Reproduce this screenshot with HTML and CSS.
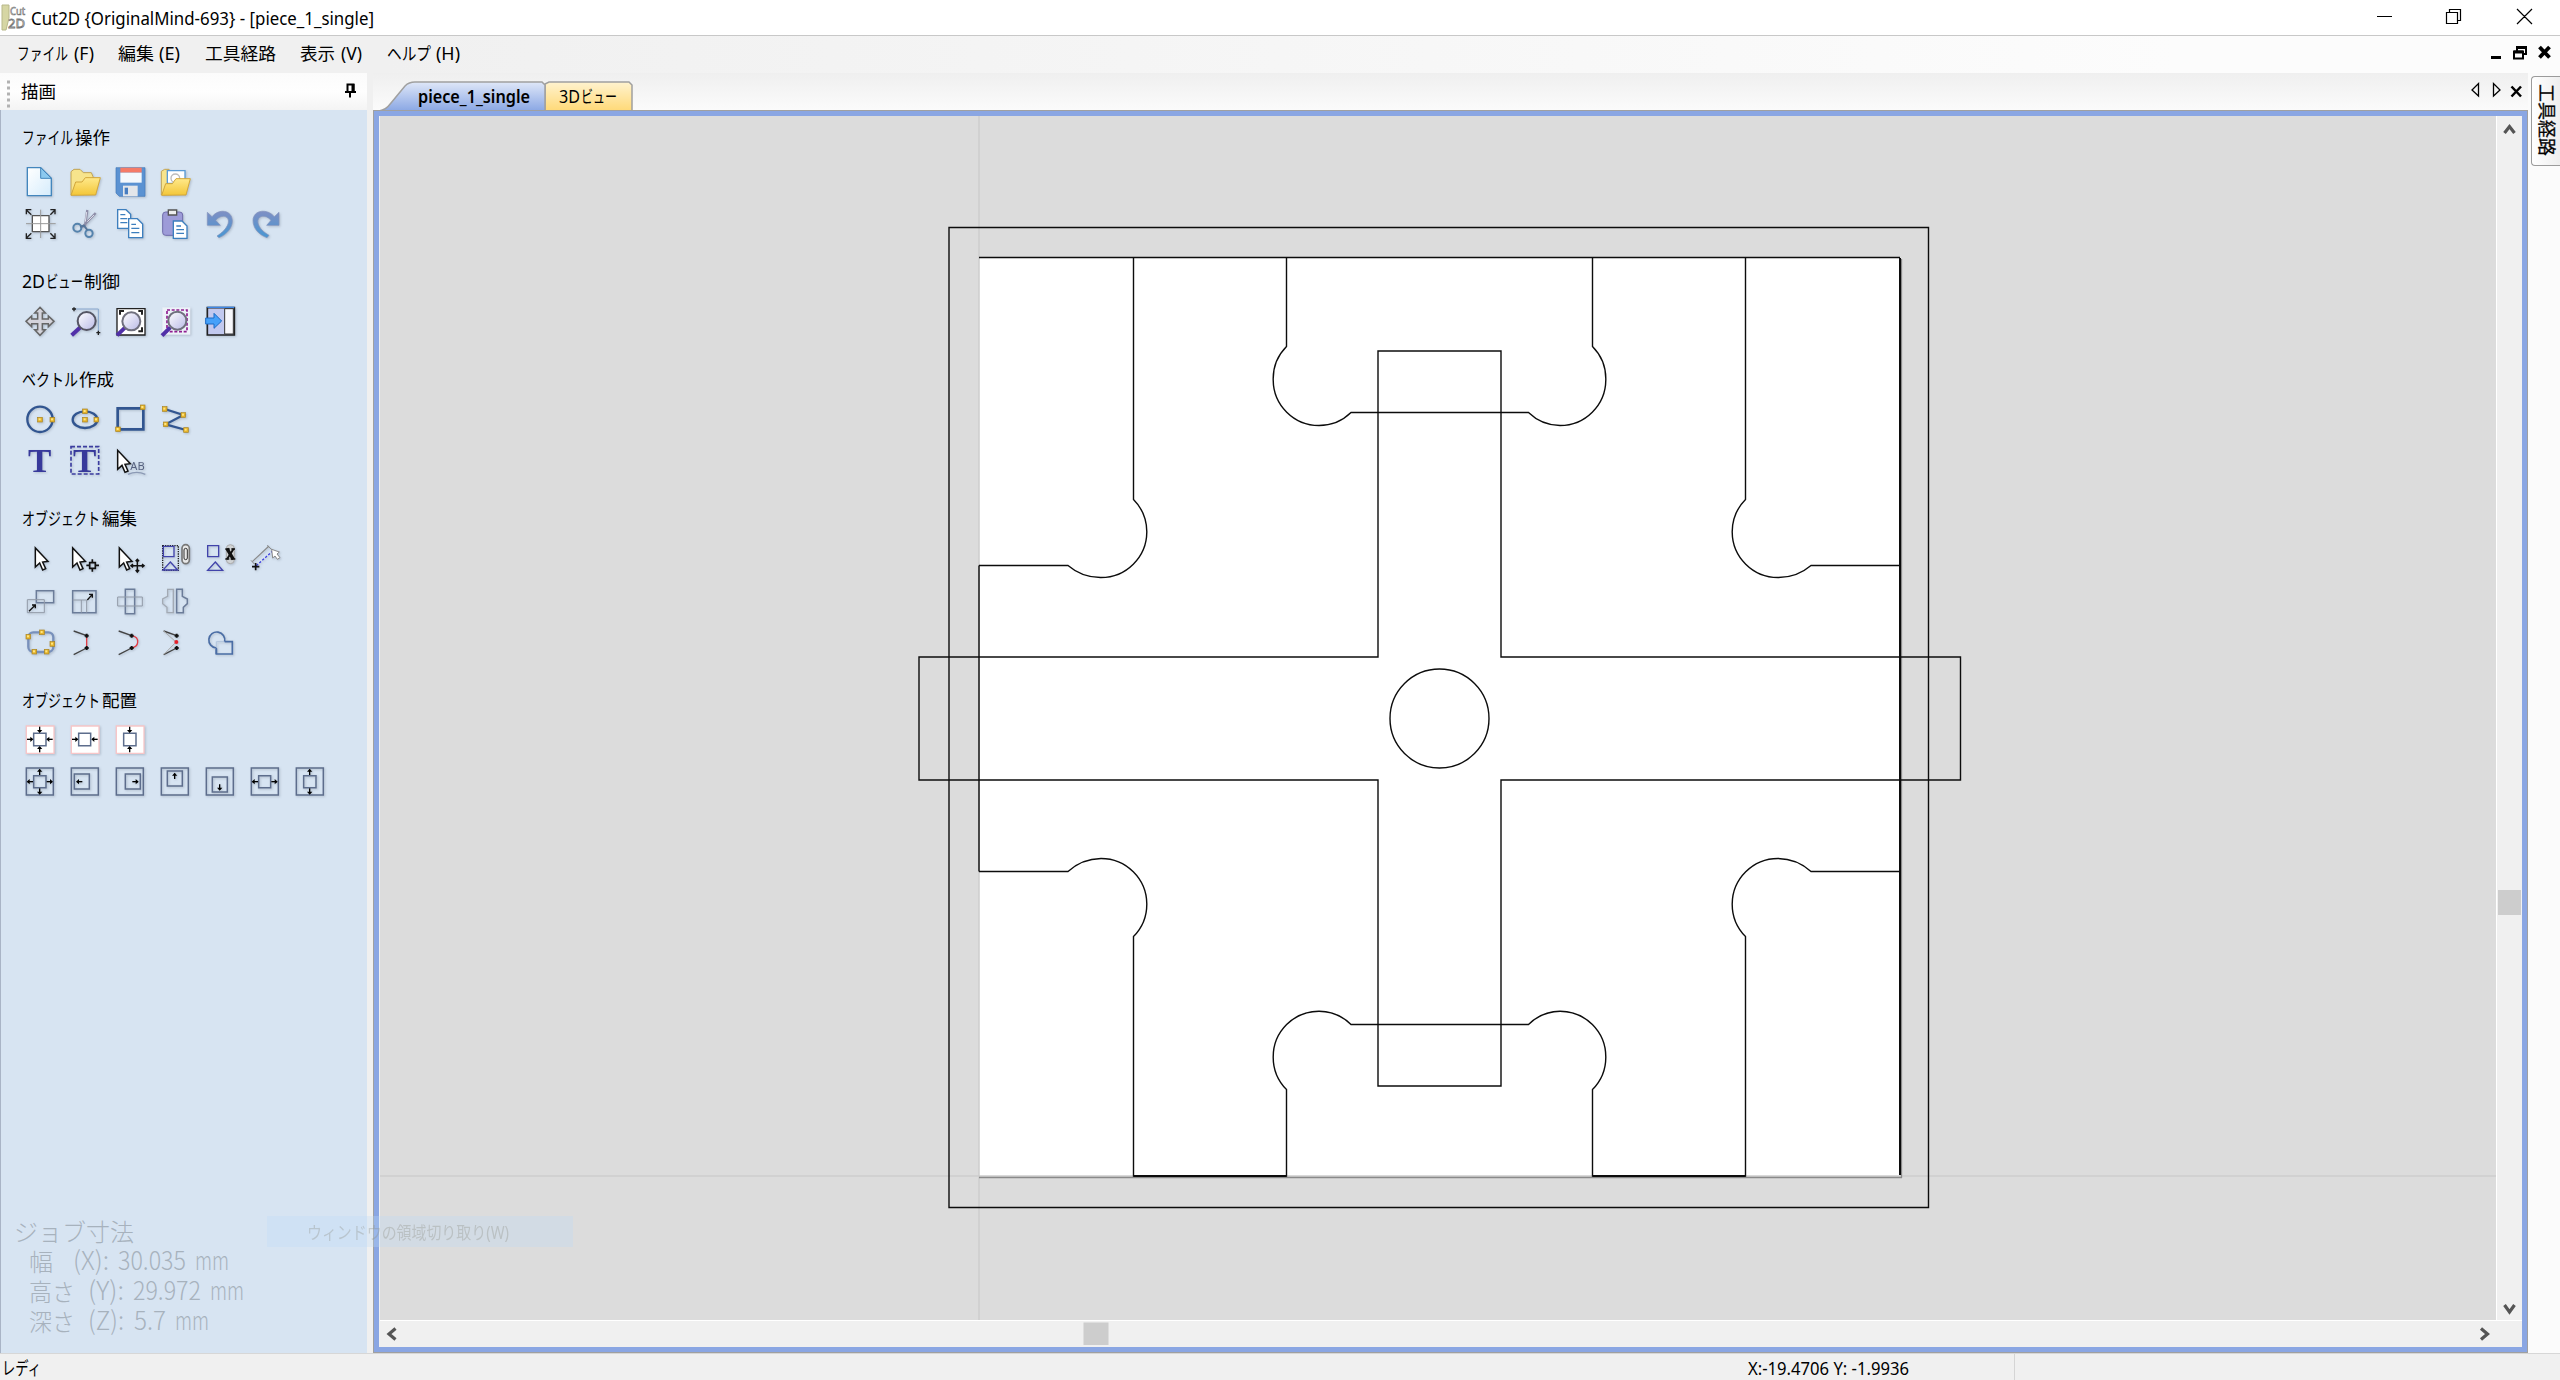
FILE: index.html
```html
<!DOCTYPE html>
<html lang="ja">
<head>
<meta charset="utf-8">
<title>Cut2D</title>
<link rel="stylesheet" href="styles.css">
</head>
<body>
<svg width="0" height="0" class="defs">
  <defs>
    <linearGradient id="paper" x1="0" y1="0" x2="1" y2="1"><stop offset="0" stop-color="#fff"/><stop offset="1" stop-color="#d5ecfc"/></linearGradient>
    <linearGradient id="gold" x1="0" y1="0" x2="0" y2="1"><stop offset="0" stop-color="#ffe98a"/><stop offset="1" stop-color="#f3c638"/></linearGradient>
    <linearGradient id="blue" x1="0" y1="0" x2="0" y2="1"><stop offset="0" stop-color="#7f8fc4"/><stop offset="1" stop-color="#4796d2"/></linearGradient>
    <linearGradient id="lens" x1="0" y1="0" x2="1" y2="1"><stop offset="0" stop-color="#fff"/><stop offset="1" stop-color="#b9b9e6"/></linearGradient>
    <linearGradient id="tabBlue" x1="0" y1="0" x2="0" y2="1"><stop offset="0" stop-color="#dfe7f8"/><stop offset="1" stop-color="#8aa7e4"/></linearGradient>
    <linearGradient id="tabGold" x1="0" y1="0" x2="0" y2="1"><stop offset="0" stop-color="#fff3cf"/><stop offset="1" stop-color="#ffd977"/></linearGradient>
    <path id="cursor" d="M0 0V57L13 45L22 66L31 62L22 42L38 40Z" fill="#fff" stroke="#111" stroke-width="4.500"/>
    <g id="node"><rect x="-7" y="-7" width="14" height="14" fill="#e5b32c" stroke="#a98424" stroke-width="2"/><rect x="-4" y="-4" width="6" height="6" fill="#ffe680"/></g>
    <g id="arrow"><path d="M0 0H16" stroke="#000" stroke-width="4"/><path d="M10 -8L19 0L10 8Z"/></g>
  </defs>
</svg>
<div class="window">
  <header class="titlebar">
    <svg class="app-icon" width="24" height="26" viewBox="0 0 24 26"><path d="M0 0H7V13L4 25H0Z" fill="#d6d6a4" stroke="#b8b88a"/><text x="8" y="10" font-size="11" fill="#fff" stroke="#777" stroke-width=".7" textLength="15" lengthAdjust="spacingAndGlyphs">Cut</text><text x="6" y="23" font-size="13" fill="#fff" stroke="#777" stroke-width=".8" textLength="17" lengthAdjust="spacingAndGlyphs">2D</text></svg>
    <svg width="346" height="30"><text x="1" y="19.500" font-size="18.500" textLength="343" lengthAdjust="spacingAndGlyphs">Cut2D {OriginalMind-693} - [piece_1_single]</text></svg>
    <svg class="win-buttons" width="160" height="20" viewBox="2375 7 160 20" fill="none" stroke="#000" stroke-width="1.2"><path d="M2377 16.500H2392M2446.500 12.500H2457.500V23.500H2446.500ZM2449.500 12V9.500H2460.500V20.500H2458M2517 9L2532 24M2532 9L2517 24"/></svg>
  </header>
  <nav class="menubar">
    <svg width="480" height="36" viewBox="0 36 480 36" font-size="17.500">
      <text x="17" y="60" textLength="51" lengthAdjust="spacingAndGlyphs">ファイル</text><text x="74" y="60" textLength="20" lengthAdjust="spacingAndGlyphs">(F)</text>
      <text x="118" y="60" textLength="36" lengthAdjust="spacingAndGlyphs">編集</text><text x="159" y="60" textLength="21" lengthAdjust="spacingAndGlyphs">(E)</text>
      <text x="205" y="60" textLength="71" lengthAdjust="spacingAndGlyphs">工具経路</text>
      <text x="300" y="60" textLength="35" lengthAdjust="spacingAndGlyphs">表示</text><text x="341" y="60" textLength="21" lengthAdjust="spacingAndGlyphs">(V)</text>
      <text x="387" y="60" textLength="44" lengthAdjust="spacingAndGlyphs">ヘルプ</text><text x="436" y="60" textLength="24" lengthAdjust="spacingAndGlyphs">(H)</text>
    </svg>
    <svg class="mdi-buttons" width="66" height="20" viewBox="2488 43 66 20" fill="none" stroke="#000" stroke-width="2"><path d="M2491 57.500H2501" stroke-width="3"/><path d="M2514 51.500H2523V58.500H2514ZM2517 51V47H2526V54H2523"/><path d="M2514 52H2523M2517 47.500H2526" stroke-width="3"/><path d="M2539.500 47L2549.500 57.500M2549.500 47L2539.500 57.500" stroke-width="3.800"/></svg>
  </nav>
  <main class="work">
    <aside class="drawer">
      <div class="drawer-head">
        <svg width="366" height="37" viewBox="0 73 366 37"><path d="M8.500 80.500V108" stroke="#b2b2b2" stroke-width="3" stroke-dasharray="3 3"/><text x="21" y="97.500" font-size="17.500" textLength="35" lengthAdjust="spacingAndGlyphs">描画</text><path d="M347.500 92V84.500H353.500V92M345 92H356M350 92V97.500" fill="none" stroke="#000" stroke-width="2"/><path d="M353 84V92" stroke="#000" stroke-width="3"/></svg>
      </div>
      <div class="panel">
        <section><svg class="head" width="240" height="32" viewBox="17 129 240 32"><text x="22" y="144" textLength="51" lengthAdjust="spacingAndGlyphs">ファイル</text><text x="75" y="144" textLength="35" lengthAdjust="spacingAndGlyphs">操作</text></svg>
          <div class="icons">
            <svg viewBox="54 123 135 126"><path d="M82 143H122L154 175V227H82Z" fill="url(#paper)" stroke="#4386bd" stroke-width="4"/><path d="M122 143V175H154Z" fill="#8cc9ef" stroke="#4386bd" stroke-width="3"/></svg>
            <svg viewBox="189 123 135 126"><path d="M213 225V155L222 148H240L250 158H274L279 170V180Z" fill="#f7e48c" stroke="#c2a455" stroke-width="3"/><path d="M213 226L227 186H246L256 173H301L287 225Z" fill="url(#gold)" stroke="#d2a63a" stroke-width="3"/></svg>
            <svg viewBox="324 123 135 126"><path d="M348 143H435V229H358L348 219Z" fill="#5b92d2" stroke="#4379b8" stroke-width="2"/><path d="M361 143H425V158H361Z" fill="#f57b68"/><path d="M361 158H425V188H361Z" fill="#f3f8fd"/><path d="M369 197H413V229H369Z" fill="#e3e6ea"/><path d="M374 203H384V223H374Z" fill="#477dc0"/></svg>
            <svg viewBox="459 123 135 126"><path d="M484 225V154L494 148H507L514 157V190Z" fill="#f7e48c" stroke="#c2a455" stroke-width="3"/><path d="M502 152H555V190H502Z" fill="#fff" stroke="#5a9bd5" stroke-width="4"/><circle cx="526" cy="175" r="13" fill="none" stroke="#bbb" stroke-width="4"/><path d="M485 226L497 191H517L528 176H571L558 225Z" fill="url(#gold)" stroke="#d2a63a" stroke-width="3"/></svg>
          </div>
          <div class="icons">
            <svg viewBox="54 249 135 126"><path d="M97 287H147V335H97Z" fill="#fff" stroke="#555" stroke-width="4"/><path d="M122 269V354M78 311H167" stroke="#999" stroke-width="3"/><path d="M79 283V269H94M79 270L94 284M151 269H165V283M165 270L151 284M79 340V355H94M79 354L94 340M151 355H165V340M165 354L151 340" fill="none" stroke="#222" stroke-width="4"/></svg>
            <svg viewBox="189 249 135 126"><path d="M262 270L255 318M287 279L246 322" stroke="#8e8ea8" stroke-width="7"/><path d="M260 276L256 305M282 285L262 305" stroke="#dcdce8" stroke-width="3"/><circle cx="232" cy="323" r="12" fill="none" stroke="#5583ad" stroke-width="6"/><circle cx="267" cy="340" r="11" fill="none" stroke="#5583ad" stroke-width="6"/><path d="M240 320L252 317L262 330" fill="none" stroke="#55759a" stroke-width="6"/></svg>
            <svg viewBox="324 249 135 126" stroke="#3d7fbe" stroke-width="4" fill="#fff"><path d="M353 269H378L392 283V325H353Z"/><path d="M361 284H376M361 296H382M361 308H382"/><path d="M386 296H412L428 312V353H386Z"/><path d="M394 313H408M394 325H418M394 338H418"/></svg>
            <svg viewBox="459 249 135 126"><rect x="488" y="276" width="60" height="70" rx="9" fill="#9d9bd8" stroke="#706cab" stroke-width="3"/><path d="M505 285V270H530V285Z" fill="#eee" stroke="#555" stroke-width="4"/><path d="M520 303H546L561 318V355H520Z" fill="#fff" stroke="#3d7fbe" stroke-width="4"/><path d="M529 318H543M529 329H552M529 340H552" stroke="#3d7fbe" stroke-width="4"/></svg>
            <svg viewBox="594 249 135 126"><path d="M622 277V316H661L647 301C665 280 692 288 684 312C679 326 667 338 651 348L657 353C682 343 697 322 697 303C696 269 656 265 636 290Z" fill="url(#blue)" stroke="#8292bd" stroke-width="2"/></svg>
            <svg viewBox="729 249 135 126"><path d="M837 277V316H800L813 301C797 281 770 286 774 309C778 326 791 336 807 346L801 353C775 344 759 324 759 301C760 269 802 265 823 290Z" fill="url(#blue)" stroke="#8292bd" stroke-width="2"/></svg>
          </div>
        </section>
        <section><svg class="head" width="240" height="32" viewBox="17 269 240 32"><text x="22" y="288" textLength="23" lengthAdjust="spacingAndGlyphs">2D</text><text x="46" y="288" textLength="37" lengthAdjust="spacingAndGlyphs">ビュー</text><text x="84" y="288" textLength="36" lengthAdjust="spacingAndGlyphs">制御</text></svg>
          <div class="icons">
            <svg viewBox="54 543 135 126"><path d="M120 562L136 579H127V597H145V588L162 604L145 620V611H127V629H136L120 646L104 629H113V611H95V620L78 604L95 588V597H113V579H104Z" fill="#d4d4dc" stroke="#666" stroke-width="4.500"/></svg>
            <svg viewBox="189 543 135 126"><path d="M222 567H295V638" fill="none" stroke="#86a6cd" stroke-width="3"/><path d="M222 562V574M216 567H228M295 632V645M289 638H301" stroke="#222" stroke-width="4"/><path d="M215 646L242 621" stroke="#5130a8" stroke-width="12"/><circle cx="260" cy="603" r="27" fill="url(#lens)" stroke="#555563" stroke-width="6"/></svg>
            <svg viewBox="324 543 135 126"><path d="M351 566H435V645H351Z" fill="#fff" stroke="#222" stroke-width="4"/><path d="M360 584V573H372M415 573H426V584M426 622V634H415" fill="none" stroke="#222" stroke-width="6"/><path d="M351 646L375 623" stroke="#5130a8" stroke-width="12"/><circle cx="394" cy="604" r="27" fill="url(#lens)" stroke="#70707e" stroke-width="6"/></svg>
            <svg viewBox="459 543 135 126"><path d="M487 562H571V644H487Z" fill="#edf2f9"/><path d="M501 570H561V635H501Z" fill="none" stroke="#901c90" stroke-width="5" stroke-dasharray="9 5"/><path d="M486 647L511 622" stroke="#5130a8" stroke-width="12"/><circle cx="532" cy="602" r="27" fill="url(#lens)" stroke="#70707e" stroke-width="6"/></svg>
            <svg viewBox="594 543 135 126"><path d="M622 563H703V645H622Z" fill="#c2c9ef" stroke="#222" stroke-width="5"/><path d="M622 562H703" stroke="#3e88e8" stroke-width="4"/><path d="M674 566H700V642H674Z" fill="#f7f7fb" stroke="#333" stroke-width="3"/><path d="M617 594H642V580L665 603L642 625V612H617Z" fill="#45a1fa" stroke="#1c6ac5" stroke-width="3"/></svg>
          </div>
        </section>
        <section><svg class="head" width="240" height="32" viewBox="17 366 240 32"><text x="22" y="385.500" textLength="56" lengthAdjust="spacingAndGlyphs">ベクトル</text><text x="79" y="385.500" textLength="35" lengthAdjust="spacingAndGlyphs">作成</text></svg>
          <div class="icons">
            <svg viewBox="54 114 135 126"><circle cx="120" cy="178" r="38" fill="none" stroke="#315590" stroke-width="7"/><use href="#node" x="120" y="179"/><use href="#node" x="157" y="179"/></svg>
            <svg viewBox="189 114 135 126"><ellipse cx="255" cy="179" rx="37" ry="25" fill="none" stroke="#315590" stroke-width="7"/><use href="#node" x="255" y="154"/><use href="#node" x="255" y="179"/><use href="#node" x="289" y="179"/></svg>
            <svg viewBox="324 114 135 126"><path d="M353 145H430V208H353Z" fill="none" stroke="#315590" stroke-width="8"/><use href="#node" x="428" y="142"/><use href="#node" x="354" y="208"/></svg>
            <svg viewBox="459 114 135 126"><path d="M494 147L550 165L497 193L558 210" fill="none" stroke="#315590" stroke-width="7"/><use href="#node" x="494" y="147"/><use href="#node" x="550" y="165"/><use href="#node" x="497" y="193"/><use href="#node" x="558" y="210"/></svg>
          </div>
          <div class="icons">
            <svg viewBox="54 240 135 126"><text x="84" y="335" class="serif" textLength="70" lengthAdjust="spacingAndGlyphs">T</text></svg>
            <svg viewBox="189 240 135 126"><path d="M213 260H296V342H213Z" fill="none" stroke="#3c3da0" stroke-width="5" stroke-dasharray="12 6"/><text x="219" y="335" class="serif" textLength="70" lengthAdjust="spacingAndGlyphs">T</text></svg>
            <svg viewBox="324 240 135 126"><use href="#cursor" x="353" y="271"/><text x="391" y="331" font-size="31" fill="#56617f" textLength="43" lengthAdjust="spacingAndGlyphs">AB</text><path d="M384 343Q410 331 436 343" fill="none" stroke="#8c9ab5" stroke-width="4"/></svg>
          </div>
        </section>
        <section><svg class="head" width="240" height="32" viewBox="17 507 240 32"><text x="22" y="524.500" textLength="78" lengthAdjust="spacingAndGlyphs">オブジェクト</text><text x="102" y="524.500" textLength="35" lengthAdjust="spacingAndGlyphs">編集</text></svg>
          <div class="icons">
            <svg viewBox="54 537 135 126"><use href="#cursor" x="106" y="564"/></svg>
            <svg viewBox="189 537 135 126"><use href="#cursor" x="218" y="564"/><path d="M269 608H286V625H269ZM277 598V608M277 625V635M259 616H269M286 616H297" fill="none" stroke="#111" stroke-width="5"/></svg>
            <svg viewBox="324 537 135 126"><use href="#cursor" x="358" y="564"/><path d="M412 600V634M395 617H430M407 604L412 598L417 604M407 630L412 636L417 630M399 612L393 617L399 622M426 612L432 617L426 622" fill="none" stroke="#111" stroke-width="4.500"/></svg>
            <svg viewBox="459 537 135 126"><path d="M488 557H535V631H488Z" fill="none" stroke="#222" stroke-width="4" stroke-dasharray="4 3"/><path d="M490 559H522V590H490ZM511 606L533 630H489Z" fill="none" stroke="#4143ab" stroke-width="4"/><rect x="546" y="554" width="22" height="57" rx="11" fill="#e8e8e8" stroke="#777" stroke-width="5"/><rect x="552" y="565" width="10" height="34" rx="5" fill="none" stroke="#333" stroke-width="3"/></svg>
            <svg viewBox="594 537 135 126"><path d="M623 557H656V590H623ZM646 606L668 631H623Z" fill="none" stroke="#4143ab" stroke-width="4"/><rect x="679" y="554" width="24" height="57" rx="12" fill="#d0d3d5" stroke="#aaa" stroke-width="3"/><path d="M681 566L700 598" stroke="#111" stroke-width="10"/><path d="M701 566L681 598" stroke="#111" stroke-width="6"/><path d="M676 567H689M694 567H705M676 597H688M692 597H706" stroke="#111" stroke-width="4"/></svg>
            <svg viewBox="729 537 135 126"><path d="M757 605L807 558" stroke="#888" stroke-width="3.500"/><path d="M753 601L763 612M801 556L818 571" stroke="#888" stroke-width="3"/><path d="M769 617L818 573" stroke="#3f3fe0" stroke-width="4" stroke-dasharray="7 5"/><path d="M767 609V631M756 620H778" stroke="#111" stroke-width="5"/><path d="M815 568L838 576L831 582L840 593L832 598L825 588L818 594Z" fill="#fff" stroke="#888" stroke-width="3"/></svg>
          </div>
          <div class="icons">
            <svg viewBox="54 663 135 126" fill="none"><path d="M109 692H161V728H109Z" stroke="#6b7c99" stroke-width="4.500"/><path d="M82 719H133V758H82Z" stroke="#929ba8" stroke-width="3"/><path d="M87 754L106 735M96 735H106V745" stroke="#111" stroke-width="4"/></svg>
            <svg viewBox="189 663 135 126" fill="none"><path d="M218 692H288V758H218Z" stroke="#6b7c99" stroke-width="4.500"/><path d="M218 720H260V758M244 720V758" stroke="#929ba8" stroke-width="3"/><path d="M262 720L277 703M267 703H277V713" stroke="#111" stroke-width="4"/></svg>
            <svg viewBox="324 663 135 126" fill="none"><path d="M376 688H404V761H376Z" stroke="#6b7c99" stroke-width="4.500"/><path d="M353 711H427V738H353Z" stroke="#929ba8" stroke-width="3"/></svg>
            <svg viewBox="459 663 135 126" fill="none"><path d="M520 688H503V709L488 717V731L501 742V758H520Z" stroke="#a3aab4" stroke-width="4"/><path d="M530 688H547V709L562 717V731L550 742V758H530Z" stroke="#6b7c99" stroke-width="4.500"/></svg>
          </div>
          <div class="icons">
            <svg viewBox="54 69 135 126"><rect x="85" y="97" width="75" height="59" rx="15" fill="none" stroke="#7890bb" stroke-width="7"/><use href="#node" x="85" y="110"/><use href="#node" x="126" y="97"/><use href="#node" x="157" y="132"/><use href="#node" x="103" y="155"/><use href="#node" x="140" y="155"/></svg>
            <svg viewBox="189 69 135 126" fill="none" stroke="#444" stroke-width="4"><path d="M221 93L260 107M260 144L221 164"/><path d="M260 107V144" stroke="#e03d46"/><path d="M254 107H266M260 101V113M254 144H266M260 138V150" stroke="#111" stroke-width="6"/></svg>
            <svg viewBox="324 69 135 126" fill="none" stroke="#444" stroke-width="4"><path d="M356 93L395 107M395 144L356 164"/><path d="M395 107Q415 111 413 127Q412 140 395 144" stroke="#e03d46"/><path d="M389 107H401M395 101V113M389 144H401M395 138V150" stroke="#111" stroke-width="6"/></svg>
            <svg viewBox="459 69 135 126" fill="none" stroke="#444" stroke-width="4"><path d="M491 93L530 107M530 144L491 164"/><path d="M491 93L528 126L491 164" stroke="#aaa" stroke-width="3"/><path d="M524 107H536M530 101V113M524 144H536M530 138V150" stroke="#111" stroke-width="6"/><circle cx="529" cy="126" r="6" fill="#e6222c" stroke="none"/></svg>
            <svg viewBox="594 69 135 126" fill="none"><path d="M649 148V162H697V125H674" stroke="#4a6da5" stroke-width="5"/><path d="M674 125H649V148" stroke="#b1c4dd" stroke-width="3"/><path d="M649 144A24 24 0 1 1 674 125M649 144V162" stroke="#4a6da5" stroke-width="5"/></svg>
          </div>
        </section>
        <section><svg class="head" width="240" height="32" viewBox="17 687 240 32"><text x="22" y="706.500" textLength="78" lengthAdjust="spacingAndGlyphs">オブジェクト</text><text x="102" y="706.500" textLength="35" lengthAdjust="spacingAndGlyphs">配置</text></svg>
          <div class="icons">
            <svg viewBox="54 357 135 126"><path class="pink" d="M79 378H162V460H79Z"/><path class="box" d="M101 400H138V437H101Z"/><use href="#arrow" transform="translate(81 418)"/><use href="#arrow" transform="translate(158 418) rotate(180)"/><use href="#arrow" transform="translate(119 380) rotate(90)"/><use href="#arrow" transform="translate(119 457) rotate(-90)"/></svg>
            <svg viewBox="189 357 135 126"><path class="pink" d="M214 378H297V460H214Z"/><path class="box" d="M236 400H272V437H236Z"/><use href="#arrow" transform="translate(216 418)"/><use href="#arrow" transform="translate(293 418) rotate(180)"/></svg>
            <svg viewBox="324 357 135 126"><path class="pink" d="M349 378H432V460H349Z"/><path class="box" d="M371 400H408V437H371Z"/><use href="#arrow" transform="translate(389 380) rotate(90)"/><use href="#arrow" transform="translate(389 457) rotate(-90)"/></svg>
          </div>
          <div class="icons">
            <svg viewBox="54 483 135 126"><path class="box" d="M79 504H160V585H79ZM101 527H138V563H101Z"/><use href="#arrow" transform="translate(99 545) rotate(180)"/><use href="#arrow" transform="translate(140 545)"/><use href="#arrow" transform="translate(119 525) rotate(-90)"/><use href="#arrow" transform="translate(119 565) rotate(90)"/></svg>
            <svg viewBox="189 483 135 126"><path class="box" d="M214 504H295V585H214ZM223 522H268V567H223Z"/><use href="#arrow" transform="translate(247 545) rotate(180)"/></svg>
            <svg viewBox="324 483 135 126"><path class="box" d="M349 504H430V585H349ZM376 522H421V567H376Z"/><use href="#arrow" transform="translate(397 545)"/></svg>
            <svg viewBox="459 483 135 126"><path class="box" d="M484 504H565V585H484ZM502 513H547V558H502Z"/><use href="#arrow" transform="translate(524 537) rotate(-90)"/></svg>
            <svg viewBox="594 483 135 126"><path class="box" d="M619 504H700V585H619ZM637 531H682V576H637Z"/><use href="#arrow" transform="translate(659 553) rotate(90)"/></svg>
            <svg viewBox="729 483 135 126"><path class="box" d="M754 504H835V585H754ZM776 527H812V563H776Z"/><use href="#arrow" transform="translate(774 545) rotate(180)"/><use href="#arrow" transform="translate(814 545)"/></svg>
            <svg viewBox="864 483 135 126"><path class="box" d="M889 504H970V585H889ZM911 527H948V563H911Z"/><use href="#arrow" transform="translate(929 525) rotate(-90)"/><use href="#arrow" transform="translate(929 565) rotate(90)"/></svg>
          </div>
        </section>
        <svg class="job" width="260" height="140" viewBox="0 1213 260 140" font-size="24">
          <text x="14" y="1241" textLength="120" lengthAdjust="spacingAndGlyphs">ジョブ寸法</text>
          <g><text x="29" y="1271">幅</text><text x="29" y="1301" textLength="46" lengthAdjust="spacingAndGlyphs">高さ</text><text x="29" y="1331" textLength="46" lengthAdjust="spacingAndGlyphs">深さ</text></g>
          <g font-size="26">
            <text x="73" y="1270" textLength="36" lengthAdjust="spacingAndGlyphs">(X):</text><text x="118" y="1270" textLength="68" lengthAdjust="spacingAndGlyphs">30.035</text><text x="195" y="1270" textLength="34" lengthAdjust="spacingAndGlyphs">mm</text>
            <text x="88" y="1300" textLength="36" lengthAdjust="spacingAndGlyphs">(Y):</text><text x="133" y="1300" textLength="68" lengthAdjust="spacingAndGlyphs">29.972</text><text x="210" y="1300" textLength="34" lengthAdjust="spacingAndGlyphs">mm</text>
            <text x="88" y="1330" textLength="36" lengthAdjust="spacingAndGlyphs">(Z):</text><text x="134" y="1330" textLength="32" lengthAdjust="spacingAndGlyphs">5.7</text><text x="175" y="1330" textLength="34" lengthAdjust="spacingAndGlyphs">mm</text>
          </g>
        </svg>
      </div>
    </aside>
    <div class="documents">
      <div class="tabs">
        <svg width="270" height="38" viewBox="373 73 270 38">
          <path d="M545 111V84L549 82H629L632 85V111Z" fill="url(#tabGold)" stroke="#a0a0a0" stroke-width="1.500"/>
          <path d="M379 111Q386 110 391 103L405 86Q409 82 415 82H542L545 85V111Z" fill="url(#tabBlue)" stroke="#a0a0a0" stroke-width="1.500"/>
          <text x="418" y="102.500" font-size="17.500" font-weight="600" textLength="112" lengthAdjust="spacingAndGlyphs">piece_1_single</text>
          <text x="559" y="102.500" font-size="17.500" textLength="21" lengthAdjust="spacingAndGlyphs">3D</text><text x="581" y="102.500" font-size="17.500" textLength="36" lengthAdjust="spacingAndGlyphs">ビュー</text>
        </svg>
        <svg class="tab-buttons" width="58" height="20" viewBox="2468 80 58 20" fill="none" stroke="#000"><path d="M2478.500 83.500V96L2472 90ZM2493.500 83.500V96L2500 90Z" stroke-width="1.300"/><path d="M2511.500 86.500L2521 96.500M2521 86.500L2511.500 96.500" stroke-width="2.500"/></svg>
      </div>
      <div class="frame">
        <svg class="canvas" viewBox="380 116 2116 1204" fill="none">
          <path d="M979 257.500H1900V1176H979Z" fill="#fff"/>
          <path d="M979 116V1320M380 1176H2496" stroke="#cdcdcd" stroke-width="1.500"/>
          <path d="M979 1177.500H1902M1901.500 259V1178" stroke="#8a8a8a" stroke-width="1.300"/>
          <g stroke="#0c0c0c" stroke-width="1.400">
            <path d="M949 227.500H1928.500V1207.500H949Z"/>
            <path d="M979 257.500H1900"/>
            <path d="M979 565.500V871.500"/>
            <path d="M1900 258V1175" stroke-width="2"/>
            <path d="M979 565.500H1068A50 50 0 0 0 1101 577.500A45.800 45.800 0 0 0 1146.800 532A46 46 0 0 0 1133.500 499.500V257.500"/>
            <path d="M1900 565.500H1811A50 50 0 0 1 1778 577.500A45.800 45.800 0 0 1 1732.200 532A46 46 0 0 1 1745.500 499.500V257.500"/>
            <path d="M979 871.500H1068A50 50 0 0 1 1101 858.500A45.800 45.800 0 0 1 1146.800 904A46 46 0 0 1 1133.500 936.500V1176H1286.500V1089.500A46 46 0 0 1 1273.200 1057A45.800 45.800 0 0 1 1319 1011.200A46 46 0 0 1 1351 1024.500H1528.500A46 46 0 0 1 1560 1011.200A45.800 45.800 0 0 1 1605.800 1057A46 46 0 0 1 1592.500 1089.500V1176H1745.500V936.500A46 46 0 0 1 1732.200 904A45.800 45.800 0 0 1 1778 858.500A50 50 0 0 1 1811 871.500H1900"/>
            <path d="M1286.500 257.500V346.500A46 46 0 0 0 1273.200 380A45.800 45.800 0 0 0 1319 425.500A46 46 0 0 0 1351 412.500H1528.500A46 46 0 0 0 1560 425.500A45.800 45.800 0 0 0 1605.800 380A46 46 0 0 0 1592.500 346.500V257.500"/>
            <path d="M1133.500 1176H1286.500M1592.500 1176H1745.500" stroke-width="2"/>
            <path d="M1378 351H1501V657H1960.500V780H1501V1086H1378V780H919V657H1378Z"/>
            <circle cx="1439.500" cy="718.500" r="49.500"/>
          </g>
        </svg>
        <div class="scroll-v"><svg width="25" height="1204" viewBox="2497 116 25 1204" fill="none" stroke="#555" stroke-width="3.200"><path d="M2504.500 133L2509.500 126.500L2514.500 133M2504.500 1305L2509.500 1312L2514.500 1305"/><path d="M2498 890H2521V915H2498Z" fill="#cdcdcd" stroke="none"/></svg></div>
        <div class="scroll-h"><svg width="2142" height="25" viewBox="380 1321 2142 25" fill="none" stroke="#555" stroke-width="3.200"><path d="M395.500 1328.500L389 1334L395.500 1339.500M2481 1328.500L2487.500 1334L2481 1339.500"/><path d="M1083.500 1322.500H1108.500V1345H1083.500Z" fill="#cdcdcd" stroke="none"/></svg></div>
      </div>
    </div>
    <aside class="dock"><div class="dock-tab"><svg width="28" height="88" viewBox="2532 77 28 88"><text class="vertical" transform="translate(2539.500 84) rotate(90)" x="0" y="0" font-size="18" textLength="72" lengthAdjust="spacingAndGlyphs">工具経路</text></svg></div></aside>
  </main>
  <footer class="status">
    <svg width="60" height="26" viewBox="0 1354 60 26"><text x="2" y="1375" font-size="18" textLength="39" lengthAdjust="spacingAndGlyphs">レディ</text></svg>
    <div class="coords"><svg width="180" height="26" viewBox="1740 1354 180 26"><text x="1748" y="1375" font-size="17.500" textLength="161" lengthAdjust="spacingAndGlyphs">X:-19.4706 Y: -1.9936</text></svg></div>
  </footer>
  <div class="ghost"><svg width="306" height="31" viewBox="267 1216 306 31"><text x="307" y="1238.500" font-size="17.500" textLength="202" lengthAdjust="spacingAndGlyphs">ウィンドウの領域切り取り(W)</text></svg></div>
</div>
</body>
</html>
```
FILE: styles.css
```css
* { box-sizing: border-box; }
body { margin: 0; overflow: hidden; background: #f0f0f0; font-family: "Noto Sans", "Noto Sans CJK JP", sans-serif; color: #111; }
svg { display: block; flex: none; overflow: visible; }
svg text { font-family: "Noto Sans", "Noto Sans CJK JP", sans-serif; white-space: pre; }
.defs { position: absolute; }
.window { position: relative; width: 2560px; height: 1380px; display: flex; flex-direction: column; }
.titlebar { height: 36px; background: #fff; border-bottom: 1px solid #c8c8c8; display: flex; align-items: flex-start; padding: 5px 25px 0 2px; }
.app-icon { margin-right: 4px; }
.win-buttons { margin: 2px 0 0 auto; }
.menubar { height: 37px; background: linear-gradient(90deg, #f0f0f0 15%, #fcfcfc 85%); display: flex; justify-content: space-between; padding-right: 6px; }
.mdi-buttons { margin-top: 7px; }
.work { height: 1280px; display: flex; }
.drawer { width: 367px; display: flex; flex-direction: column; }
.drawer-head { height: 37px; background: linear-gradient(#fbfbfb, #fefefe 50%, #f4f4f4); }
.panel { flex: 1; background: #d7e4f2; border-left: 1px solid #a9b4c6; padding: 19px 0 0 16px; display: grid; grid-template-rows: 140px 97px 141px 180px 1fr 140px; }
.head { font-size: 17.5px; }
.icons { display: flex; height: 42px; margin-left: 1px; }
.icons svg { width: 45px; height: 42px; filter: drop-shadow(1px 1px 1px rgba(60, 70, 90, .25)); }
svg .serif { font-family: "Liberation Serif", serif; font-weight: bold; font-size: 98px; fill: #37399b; }
.box { fill: none; stroke: #5d6d8c; stroke-width: 4.5; }
.pink { fill: #fff; stroke: #f8c6c8; stroke-width: 4; }
.job { margin-left: -17px; fill: #a7b2bd; }
.job text { font-family: "Noto Sans CJK JP", sans-serif; font-weight: 300; }
.vertical { stroke: #111; stroke-width: .3; }
.documents { width: 2155px; margin-left: 6px; display: flex; flex-direction: column; }
.tabs { height: 37px; display: flex; justify-content: space-between; padding-right: 2px; background: linear-gradient(#efefef, #fbfbfb); }
.tab-buttons { margin-top: 7px; }
.frame { flex: 1; border: 1px solid #a0a0a0; box-shadow: inset 0 0 0 5px #8aa6e3; padding: 5px 5px 6px 6px; display: grid; grid-template: 1204px 26px / 2116px 26px; align-content: start; }
.canvas { width: 2116px; height: 1204px; background: #dcdcdc; }
.scroll-v { background: #f0f0f0; border-left: 1px solid #fff; }
.scroll-h { grid-column: 1 / 3; background: #f0f0f0; border-top: 1px solid #fff; }
.dock { flex: 1; background: #fbfbfb; padding: 3px 0 0 3px; }
.dock-tab { height: 90px; border: 1px solid #9b9b9b; border-right: 0; border-radius: 4px 0 0 4px; background: linear-gradient(90deg, #fff, #eee); }
.status { height: 27px; border-top: 1px solid #d7d7d7; background: #f0f0f0; display: flex; }
.coords { margin-left: 1680px; width: 275px; border-right: 1px solid #d5d5d5; }
.ghost { position: absolute; left: 267px; top: 1216px; width: 306px; height: 31px; background: rgba(190, 219, 248, .3); fill: #8b8b80; }
.ghost svg { opacity: .32; }
```
